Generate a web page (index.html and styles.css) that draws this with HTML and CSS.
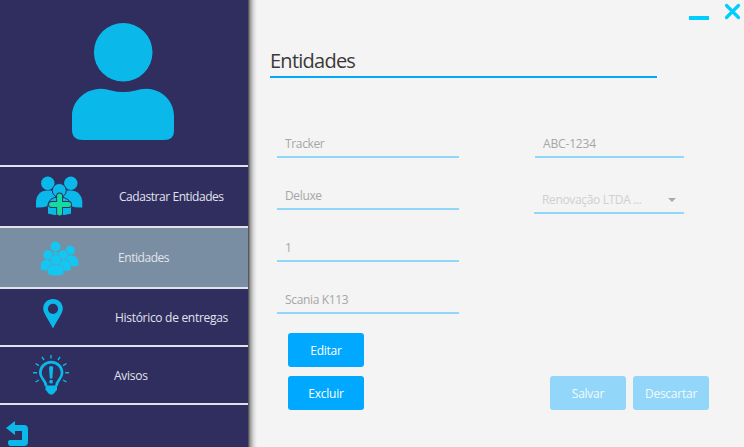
FILE: index.html
```html
<!DOCTYPE html>
<html lang="pt-BR">
<head>
<meta charset="utf-8">
<title>Entidades</title>
<link rel="stylesheet" href="styles.css">
</head>
<body>
<div class="app">
  <aside class="sidebar">
    <div class="profile">
      <svg width="102" height="118" viewBox="72 22.5 102 118" fill="#0ab9e9"><circle cx="123.2" cy="51.8" r="29.3"/><path d="M101 88.300Q106 88.300 111 89.900Q123 93.300 135.500 89.900Q140 88.300 147 88.300C162 89 174 100.500 174 115.500V130.500Q174 139.500 164 139.500H83Q72 139.500 72 129.500V115.500C72 101.500 84 88.500 101 88.300Z"/></svg>
    </div>
    <nav>
      <a class="item item-add">
        <svg class="icon" width="50" height="44" viewBox="34 174.5 50 44"><g fill="#0ab9e9"><circle cx="47.800" cy="182.800" r="6.700"/><circle cx="70.800" cy="182.800" r="6.700"/><path d="M36 207V201Q37 190 47 190H53Q54 194 56 198Q48 201 48 205.500Q42 207.500 36 207ZM82.300 207V201Q81 190 71 190H65.500Q64.500 194 62.500 198Q70.500 201 70.500 205.500Q76 207.500 82.300 207Z"/><g stroke="#2f2e5f" stroke-width="1"><path d="M47.500 213.500V207Q48 196.500 59 196.500Q71 196.500 71.500 207V213.500Q59.500 217 47.500 213.500Z"/><circle cx="59.300" cy="190" r="7"/></g></g><path d="M59.600 195.500V212.500M51.500 204H68.500" stroke="#2f2e5f" stroke-width="6.800" stroke-linecap="round"/><path d="M59.600 195.500V212.500M51.500 204H68.500" stroke="#12dca0" stroke-width="5" stroke-linecap="round"/></svg>
        <span>Cadastrar Entidades</span>
      </a>
      <a class="item item-group active">
        <svg class="icon" width="40" height="36" viewBox="40 240.500 40 36" fill="#14c6f2" stroke="#798ea2" stroke-width="0.5"><circle cx="55.500" cy="247" r="5.200"/><circle cx="70.300" cy="250.800" r="4.900"/><path d="M52 258Q52 252 56 252Q60 252 60 258Z"/><path d="M65 266.500V261Q66 255.500 71.500 255.500Q77.500 256 78.500 262V266.500Q72 268 65 266.500Z"/><circle cx="48" cy="255.500" r="5"/><circle cx="63" cy="255.500" r="5"/><path d="M40.500 270.500V266Q41 260 47 260Q53 260 54 266V271Q46 272 40.500 270.500ZM57 271V266Q58 260 63.500 260Q70 260 71 266V270.500Q65 273 57 271Z"/><circle cx="55.800" cy="260.300" r="5.300"/><path d="M47.500 275V270Q49 264.700 55.700 264.700Q62.500 265 63.800 270V275Q56 277.500 47.500 275Z"/></svg>
        <span>Entidades</span>
      </a>
      <a class="item item-pin">
        <svg class="icon" width="20" height="30" viewBox="42.500 299 20 30"><path fill="#0ab9e9" fill-rule="evenodd" d="M52.500 299C58 299 62.300 303 62.300 308.600C62.300 313 58 318 52.500 328.500C47 318 42.700 313 42.700 308.600C42.700 303 47 299 52.500 299ZM52.500 303.700A5.100 5.100 0 1 0 52.500 313.900A5.100 5.100 0 1 0 52.500 303.700Z"/></svg>
        <span>Histórico de entregas</span>
      </a>
      <a class="item item-alert">
        <svg class="icon" width="38" height="42" viewBox="32 355 38 42" fill="none" stroke="#0ab9e9"><path stroke-width="2.700" d="M46 387C46 381 40.300 380 40.300 373.800A10.900 10.700 0 0 1 62.100 373.800C62.100 380 56.500 381 56.500 387"/><path fill="#0ab9e9" stroke="none" d="M45.500 386.500H57V391Q55.500 392 54.500 394Q51.200 397.500 48 394Q47 392 45.500 391Z"/><path fill="#0ab9e9" stroke="none" d="M49 368.500Q49 367 51.100 367Q53.200 367 53.200 368.500L52.400 379.500H49.800Z"/><circle cx="51.100" cy="382.700" r="1.900" fill="#0ab9e9" stroke="none"/><path stroke-width="1.400" d="M51 356V359.500M42 358L44 361M60 358L58 361M35.500 364.500L39 366.700M66.500 364.500L63 366.700M33 373.700H37M65.200 373.700H69M35.500 383L39 381M66.500 383L63 381"/></svg>
        <span>Avisos</span>
      </a>
    </nav>
    <div class="back">
      <svg width="22" height="25" viewBox="6 421 22 25" fill="#0ab9e9"><path d="M6 428L15 421V425H24Q28 425 28 429V442Q28 446 24 446H10Q8 445.500 8 443Q8 440 10 440H22V431H15V435Z"/></svg>
    </div>
  </aside>
  <main class="content">
    <div class="window-controls">
      <span class="minimize"></span>
      <svg width="17" height="17" viewBox="0 0 17 17" stroke="#00cdff" stroke-width="3.200" stroke-linecap="round"><path d="M2.500 2.500L14.500 14.500M14.500 2.500L2.500 14.500"/></svg>
    </div>
    <h1><span>Entidades</span></h1>
    <div class="form">
      <div class="fields">
        <div class="field"><span>Tracker</span></div>
        <div class="field"><span>Deluxe</span></div>
        <div class="field"><span>1</span></div>
        <div class="field"><span>Scania K113</span></div>
      </div>
      <div class="fields side">
        <div class="field plate"><span>ABC-1234</span></div>
        <div class="field combo"><span>Renovação LTDA ...</span><svg width="8" height="4" viewBox="0 0 8 4"><path fill="#aaa" d="M0 0H8L4 4Z"/></svg></div>
      </div>
    </div>
    <div class="actions">
      <div class="stack">
        <button>Editar</button>
        <button>Excluir</button>
      </div>
      <div class="pair">
        <button disabled>Salvar</button>
        <button disabled>Descartar</button>
      </div>
    </div>
  </main>
</div>
</body>
</html>
```
FILE: styles.css
```css
* { box-sizing: border-box; }
body { margin: 0; font-family: "Open Sans", "Noto Sans", sans-serif; font-size: 12px; line-height: 16px; letter-spacing: -0.35px; overflow: hidden; }
.app { display: flex; width: 744px; height: 447px; background: #f4f4f4; }
.sidebar { width: 248px; flex: none; display: flex; flex-direction: column; background: #2f2e5f; }
.profile { height: 167px; padding: 22.5px 0 0 72px; border-bottom: 2px solid #e4e1f0; }
svg { display: block; flex: none; }
.item { display: flex; align-items: center; height: 58px; border-bottom: 2px solid #e2e2ec; color: #e2e3ec; white-space: nowrap; }
.item-add, .item-group { height: 61px; }
.item-add { padding-left: 34px; gap: 35px; letter-spacing: -0.44px; }
.item-group { padding-left: 40px; gap: 38px; letter-spacing: -0.45px; }
.item-pin { padding-left: 42.5px; gap: 52.5px; letter-spacing: -0.3px; }
.item-pin .icon { margin-bottom: 7px; }
.item-alert { padding-left: 32px; gap: 44px; letter-spacing: -0.25px; }
.item-pin span, .item-alert span { padding-top: 2px; }
.active { background: #798ea2; }
.back { padding: 16px 0 0 6px; }
.content { flex: 1; display: flex; flex-direction: column; background: linear-gradient(to right, #4a4a4a 0, #666 1px, #989898 2px, #bcbcbc 4px, #dedede 6px, #f4f4f4 9px); }
.window-controls { display: flex; justify-content: flex-end; gap: 15px; height: 21px; padding: 3px 3px 0 0; }
.minimize { width: 20px; height: 4px; margin-top: 13px; background: #00cdff; }
h1 { width: 387px; height: 31px; margin: 26px 0 0 22px; border-bottom: 2px solid #00a8ff; font-size: 20px; font-weight: 400; line-height: 27px; letter-spacing: -0.75px; color: #3a3a3a; }
.form { display: flex; margin: 54px 0 0 29px; gap: 75px; }
.fields { display: grid; width: 182px; row-gap: 26px; align-content: start; }
.field { display: flex; height: 26px; padding: 4px 8px 0; border-bottom: 2px solid #90d7f9; color: #a6a6a6; white-space: nowrap; }
.side { width: 150px; row-gap: 30px; }
.plate { margin-left: 1px; letter-spacing: -0.15px; }
.combo { justify-content: space-between; color: #d0d0d0; }
.combo svg { margin-top: 6px; }
.actions { display: flex; align-items: flex-end; margin: 19px 0 0 40px; gap: 186px; }
.stack { display: grid; gap: 9px; }
.pair { display: flex; gap: 7px; }
button { width: 76px; height: 34px; padding: 2px 0 0; border: 0; border-radius: 3px; background: #00a8ff; color: #fff; font: inherit; letter-spacing: -0.25px; }
button:disabled { background: #92d7f9; color: #f2faff; }
```
